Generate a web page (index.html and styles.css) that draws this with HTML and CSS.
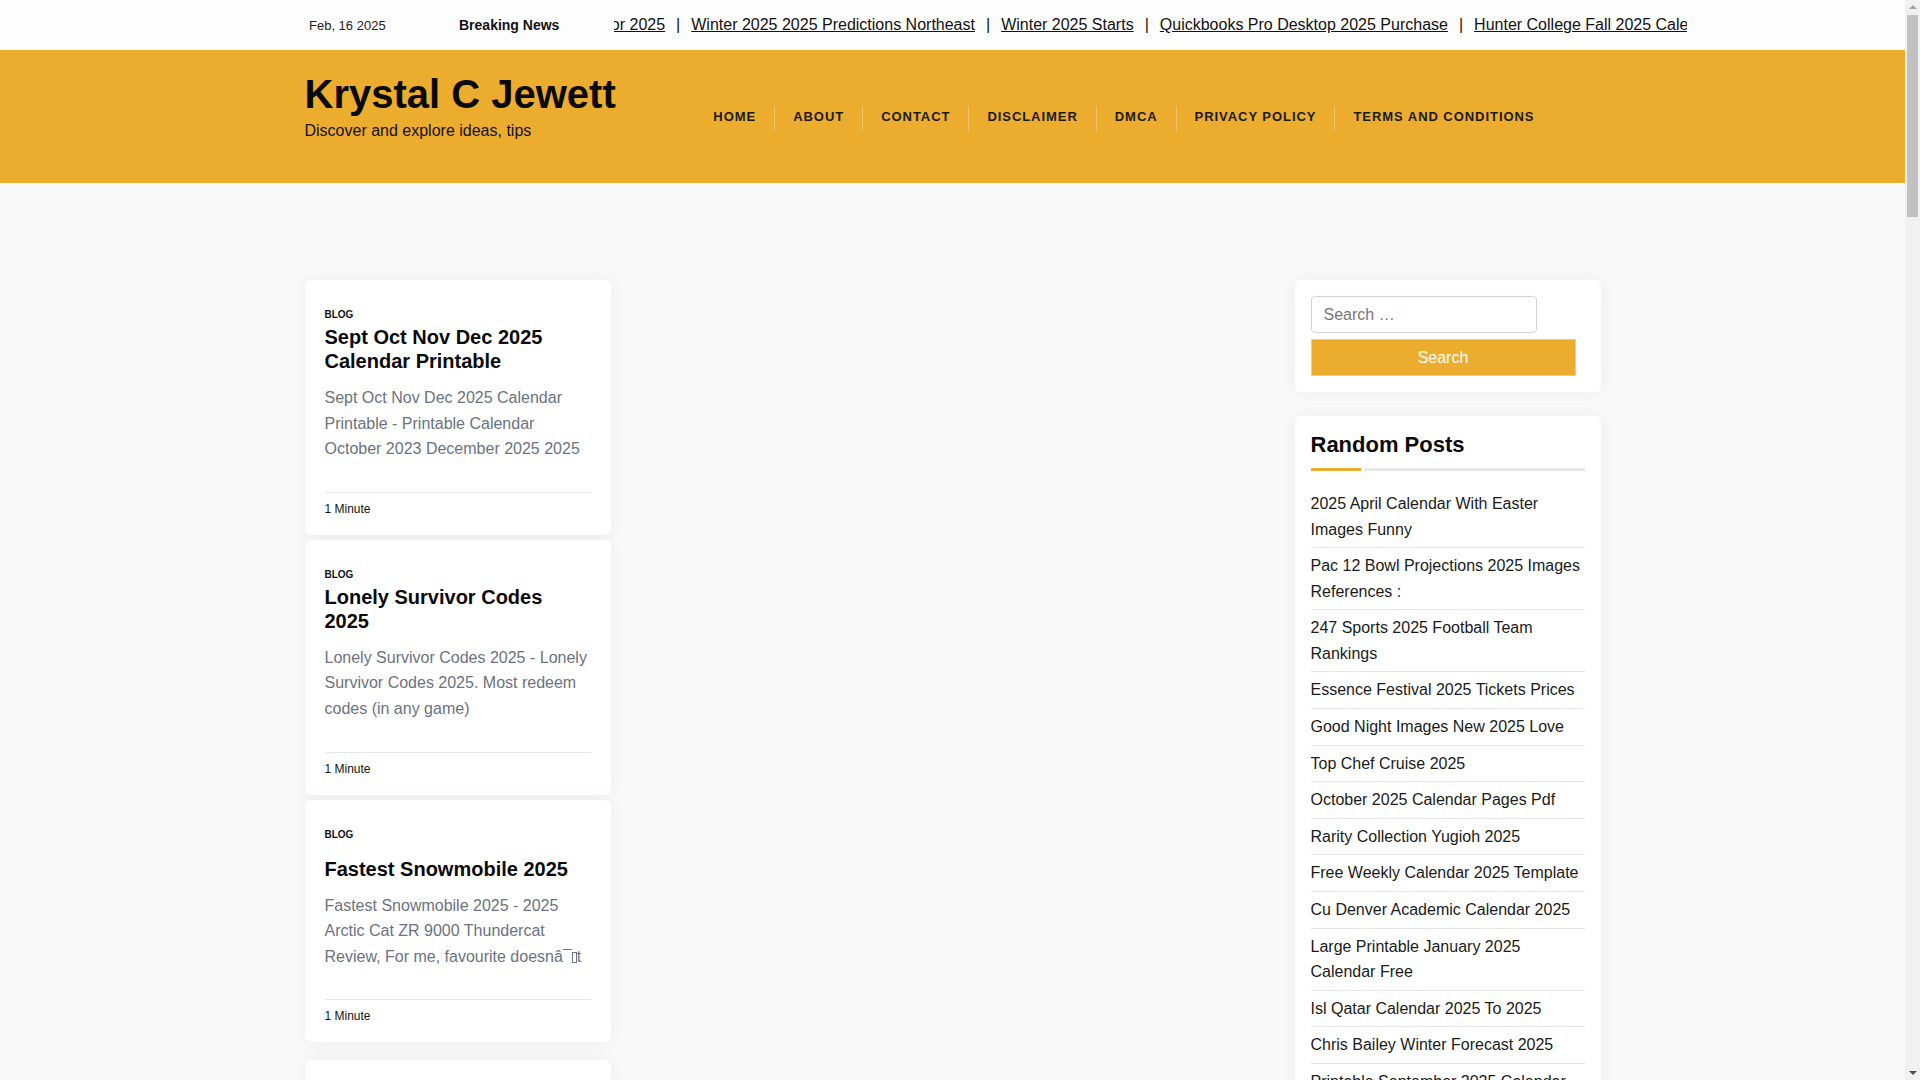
FILE: index.html
```html
<!DOCTYPE html>
<html lang="en">
<head>
<meta charset="utf-8">
<title>Krystal C Jewett</title>
<link rel="stylesheet" href="styles.css">
</head>
<body>
<div class="topbar">
  <div class="container topbar-inner">
    <span class="date">Feb, 16 2025</span>
    <span class="breaking">Breaking News</span>
    <div class="ticker">
      <div class="ticker-track">
        <a href="#">Best Planner For 2025</a><span class="sep">|</span>
        <a href="#">Winter 2025 2025 Predictions Northeast</a><span class="sep">|</span>
        <a href="#">Winter 2025 Starts</a><span class="sep">|</span>
        <a href="#">Quickbooks Pro Desktop 2025 Purchase</a><span class="sep">|</span>
        <a href="#">Hunter College Fall 2025 Calendar</a><span class="sep">|</span>
        <a href="#">Top Chef Cruise 2025</a>
      </div>
    </div>
  </div>
</div>

<header class="site-header">
  <div class="container header-inner">
    <div class="branding">
      <div class="site-title">Krystal C Jewett</div>
      <div class="site-tagline">Discover and explore ideas, tips</div>
    </div>
    <nav class="main-nav">
      <ul>
        <li><a href="#">Home</a></li>
        <li><a href="#">About</a></li>
        <li><a href="#">Contact</a></li>
        <li><a href="#">Disclaimer</a></li>
        <li><a href="#">DMCA</a></li>
        <li><a href="#">Privacy Policy</a></li>
        <li><a href="#">Terms and Conditions</a></li>
      </ul>
    </nav>
  </div>
</header>

<div class="container content">
  <main class="posts">
    <article class="card post-card">
      <div class="post-cat">Blog</div>
      <h2 class="post-title">Sept Oct Nov Dec 2025 Calendar Printable</h2>
      <p class="post-excerpt">Sept Oct Nov Dec 2025 Calendar Printable - Printable Calendar October 2023 December 2025 2025</p>
      <div class="post-meta">1 Minute</div>
    </article>
    <article class="card post-card">
      <div class="post-cat">Blog</div>
      <h2 class="post-title">Lonely Survivor Codes 2025</h2>
      <p class="post-excerpt">Lonely Survivor Codes 2025 - Lonely Survivor Codes 2025. Most redeem codes (in any game)</p>
      <div class="post-meta">1 Minute</div>
    </article>
    <article class="card post-card post-card--last-row">
      <div class="post-cat">Blog</div>
      <h2 class="post-title post-title--single">Fastest Snowmobile 2025</h2>
      <p class="post-excerpt">Fastest Snowmobile 2025 - 2025 Arctic Cat ZR 9000 Thundercat Review, For me, favourite doesnâ¯<span class="tofu"></span>t</p>
      <div class="post-meta">1 Minute</div>
    </article>
    <article class="card post-card">
      <div class="post-cat">Blog</div>
      <h2 class="post-title">Top Chef Cruise 2025</h2>
      <p class="post-excerpt">Top Chef Cruise 2025 - Top Chef Cruise 2025 Dates and destinations for the upcoming season</p>
      <div class="post-meta">1 Minute</div>
    </article>
    <article class="card post-card">
      <div class="post-cat">Blog</div>
      <h2 class="post-title">Winter 2025 Starts</h2>
      <p class="post-excerpt">Winter 2025 Starts - When does winter start in 2025 and what the season could bring</p>
      <div class="post-meta">1 Minute</div>
    </article>
    <article class="card post-card">
      <div class="post-cat">Blog</div>
      <h2 class="post-title">Quickbooks Pro Desktop 2025 Purchase</h2>
      <p class="post-excerpt">Quickbooks Pro Desktop 2025 Purchase - Everything you need to know before you buy</p>
      <div class="post-meta">1 Minute</div>
    </article>
    <article class="card post-card">
      <div class="post-cat">Blog</div>
      <h2 class="post-title">Hunter College Fall 2025 Calendar</h2>
      <p class="post-excerpt">Hunter College Fall 2025 Calendar - Important dates for the fall semester 2025</p>
      <div class="post-meta">1 Minute</div>
    </article>
    <article class="card post-card">
      <div class="post-cat">Blog</div>
      <h2 class="post-title">Essence Festival 2025 Tickets Prices</h2>
      <p class="post-excerpt">Essence Festival 2025 Tickets Prices - Lineup, dates and ticket options for 2025</p>
      <div class="post-meta">1 Minute</div>
    </article>
  </main>

  <aside class="sidebar">
    <section class="card widget search-widget">
      <form class="search-form">
        <input class="search-field" type="search" placeholder="Search …">
        <button class="search-submit" type="button">Search</button>
      </form>
    </section>
    <section class="card widget">
      <h3 class="widget-title">Random Posts</h3>
      <div class="widget-rule"><span class="rule-accent"></span><span class="rule-line"></span></div>
      <ul class="post-list">
        <li><a href="#">2025 April Calendar With Easter Images Funny</a></li>
        <li><a href="#">Pac 12 Bowl Projections 2025 Images References :</a></li>
        <li><a href="#">247 Sports 2025 Football Team Rankings</a></li>
        <li><a href="#">Essence Festival 2025 Tickets Prices</a></li>
        <li><a href="#">Good Night Images New 2025 Love</a></li>
        <li><a href="#">Top Chef Cruise 2025</a></li>
        <li><a href="#">October 2025 Calendar Pages Pdf</a></li>
        <li><a href="#">Rarity Collection Yugioh 2025</a></li>
        <li><a href="#">Free Weekly Calendar 2025 Template</a></li>
        <li><a href="#">Cu Denver Academic Calendar 2025</a></li>
        <li><a href="#">Large Printable January 2025 Calendar Free</a></li>
        <li><a href="#">Isl Qatar Calendar 2025 To 2025</a></li>
        <li><a href="#">Chris Bailey Winter Forecast 2025</a></li>
        <li><a href="#">Printable September 2025 Calendar</a></li>
        <li><a href="#">Winter 2025 Starts</a></li>
      </ul>
    </section>
  </aside>
</div>

<div class="fake-scrollbar" aria-hidden="true">
  <span class="sb-arrow sb-up"></span>
  <span class="sb-thumb"></span>
  <span class="sb-arrow sb-down"></span>
</div>
</body>
</html>
```

FILE: styles.css
```css
* { box-sizing: border-box; }

html, body {
  margin: 0;
  padding: 0;
}

body {
  background: #f9f9f9;
  font-family: "Liberation Sans", Arial, sans-serif;
  color: #111;
  padding-right: 15px;
}

a { color: inherit; text-decoration: none; }

.container {
  width: 1296px;
  margin: 0 auto;
}

/* Top bar */
.topbar {
  background: #fdfdfd;
  height: 50px;
}

.topbar-inner {
  display: flex;
  align-items: center;
  height: 50px;
  padding-left: 4.5px;
}

.date {
  flex: none;
  width: 150px;
  font-size: 13px;
  color: #222;
}

.breaking {
  flex: none;
  width: 155px;
  font-size: 14px;
  font-weight: bold;
  color: #111;
}

.ticker {
  flex: none;
  width: 1073px;
  overflow: hidden;
  white-space: nowrap;
}

.ticker-track {
  display: inline-flex;
  transform: translateX(-109px);
  font-size: 16px;
  line-height: 22px;
}

.ticker-track a {
  color: #111;
  text-decoration: underline;
}

.ticker-track .sep {
  padding: 0 11px;
  color: #111;
}

/* Header */
.site-header {
  background: #ecac2e;
  height: 133px;
}

.header-inner {
  display: flex;
  align-items: flex-start;
  padding-top: 20px;
}

.site-title {
  font-size: 40px;
  line-height: 48px;
  font-weight: bold;
  color: #0a0a0a;
}

.site-tagline {
  font-size: 16px;
  line-height: 24px;
  margin-top: 1px;
  color: #111;
}

.main-nav {
  margin-left: auto;
  margin-right: 48px;
  margin-top: 36px;
}

.main-nav ul {
  display: flex;
  list-style: none;
  margin: 0;
  padding: 0;
}

.main-nav li {
  height: 25px;
  padding: 0 18px;
  border-left: 1px solid rgba(255, 255, 255, 0.28);
}

.main-nav li:first-child { border-left: 0; }

.main-nav a {
  display: block;
  font-size: 13px;
  line-height: 21px;
  padding-bottom: 4px;
  font-weight: bold;
  text-transform: uppercase;
  letter-spacing: 0.95px;
  color: #1a1a1a;
}

/* Content */
.content {
  display: grid;
  grid-template-columns: 1fr 306px;
  column-gap: 24px;
  padding-top: 97px;
  padding-bottom: 40px;
  align-items: start;
}

.card {
  background: #fff;
  border-radius: 6px;
  box-shadow: 0 0 18px rgba(0, 0, 0, 0.055);
}

.posts {
  display: flex;
  flex-direction: column;
  width: 306px;
}

.post-card {
  padding: 27px 20px 17px;
  margin-bottom: 5px;
}

.post-card--last-row { margin-bottom: 18px; }

.post-cat {
  font-size: 10px;
  line-height: 15px;
  font-weight: bold;
  text-transform: uppercase;
  color: #111;
}

.post-title {
  margin: 3px 0 0;
  font-size: 20px;
  line-height: 24px;
  font-weight: bold;
  color: #0a0a0a;
}

.post-title--single { margin-top: 15px; }

.post-excerpt {
  margin: 12px 0 0;
  font-size: 16px;
  line-height: 25.6px;
  color: #6b7280;
}

.tofu {
  display: inline-block;
  width: 5px;
  height: 11px;
  border: 1px solid #6b7280;
  vertical-align: -1px;
}

.post-meta {
  margin-top: 30px;
  border-top: 1px solid #e5e7eb;
  padding-top: 7px;
  font-size: 12px;
  line-height: 18px;
  color: #111;
}

/* Sidebar */
.sidebar {
  display: flex;
  flex-direction: column;
  gap: 24px;
}

.widget {
  padding: 16px;
}

.search-form {
  display: flex;
  flex-direction: column;
  align-items: flex-start;
}

.search-field {
  width: 226px;
  height: 37px;
  padding: 0 12px;
  border: 1px solid #d1d5db;
  border-radius: 4px;
  font-family: "Liberation Sans", Arial, sans-serif;
  font-size: 16px;
  color: #333;
  background: #fff;
  outline: none;
}

.search-field::placeholder { color: #777; }

.search-submit {
  margin-top: 6px;
  width: 265px;
  height: 37px;
  background: #ecac2e;
  border: 1px solid #cfcfcf;
  color: #fff;
  font-family: "Liberation Sans", Arial, sans-serif;
  font-size: 16px;
  padding: 0;
}

.widget-title {
  margin: 0;
  font-size: 22px;
  line-height: 26.4px;
  font-weight: bold;
  color: #0a0a0a;
  padding-bottom: 10px;
}

.widget-rule {
  display: flex;
  gap: 4px;
  height: 3px;
}

.rule-accent {
  width: 50px;
  background: #ecac2e;
}

.rule-line {
  flex: 1;
  background: #e9e9e9;
}

.post-list {
  list-style: none;
  margin: 14.5px 0 0;
  padding: 0;
}

.post-list li {
  padding: 5px 0;
  border-bottom: 1px solid #e6e6e6;
  font-size: 16px;
  line-height: 25.6px;
  color: #1a1a1a;
}

/* Browser scrollbar as it appears in the capture */
.fake-scrollbar {
  position: fixed;
  top: 0;
  right: 0;
  width: 15px;
  height: 100vh;
  background: #f1f1f1;
  display: flex;
  flex-direction: column;
  align-items: center;
}

.sb-arrow {
  width: 0;
  height: 0;
  border-left: 4px solid transparent;
  border-right: 4px solid transparent;
}

.sb-up {
  margin-top: 5px;
  border-bottom: 4px solid #a3a3a3;
}

.sb-thumb {
  margin-top: 6px;
  width: 11px;
  height: 202px;
  background: #c1c1c1;
}

.sb-down {
  margin-top: auto;
  margin-bottom: 5px;
  border-top: 4px solid #505050;
}
```
